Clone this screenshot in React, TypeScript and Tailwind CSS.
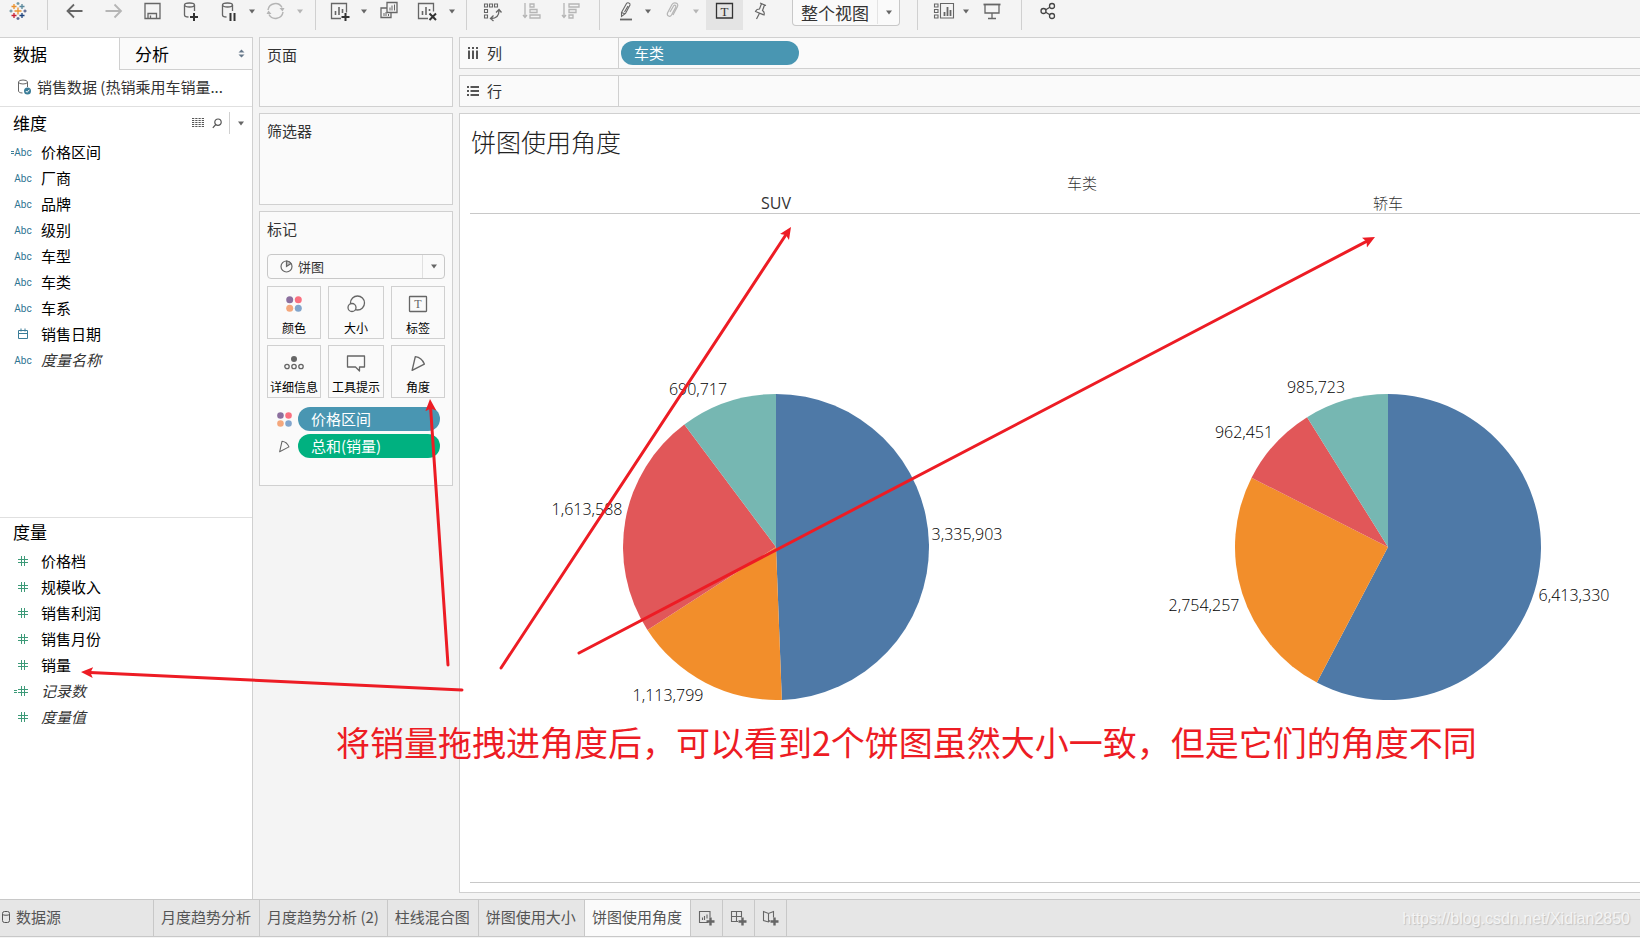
import React, { useState } from 'react';

type IconProps = {
  children: React.ReactNode;
  color?: string;
};

// Toolbar icons share a 20x22 box
const ToolIcon: React.FC<IconProps> = ({ children, color = '#666666' }) => (
  <svg width="20" height="22" viewBox="0 0 20 22" fill="none" stroke={color} strokeWidth="1.3" className="shrink-0 overflow-visible">
    {children}
  </svg>
);

const Caret = ({ color = '#666666' }: { color?: string }) => (
  <svg width="8" height="5" viewBox="0 0 8 5" className="shrink-0">
    <path d="M1 0.5h6L4 4.5z" fill={color} />
  </svg>
);

type ToolProps = {
  label: string;
  className: string;
  disabled?: boolean;
  children: React.ReactNode;
};

const Tool: React.FC<ToolProps> = ({ label, className, disabled, children }) => (
  <button aria-label={label} title={label} disabled={disabled} className={`flex h-[30px] shrink-0 justify-center ${className}`}>
    {children}
  </button>
);

const CaretTool = ({ className, disabled }: { className: string; disabled?: boolean }) => (
  <button aria-label="更多选项" disabled={disabled} className={`flex h-[22px] shrink-0 items-center justify-center ${className}`}>
    <Caret color={disabled ? '#b5b5b5' : '#666666'} />
  </button>
);

const ToolGroup = ({ className, children }: { className: string; children: React.ReactNode }) => (
  <div className={`flex h-[30px] shrink-0 items-start border-r border-[#d0d0d0] ${className}`}>{children}</div>
);

const Plus = ({ x, y }: { x: number; y: number }) => (
  <path d={`M${x - 4} ${y}h8M${x} ${y - 4}v8`} stroke="#333333" strokeWidth="2" />
);

const logoMarks = [
  { x: 10, y: 11, r: 3.5, color: '#eb912c' },
  { x: 6, y: 6.5, r: 2.5, color: '#eb912c' },
  { x: 14, y: 6.5, r: 2.5, color: '#59879b' },
  { x: 6, y: 15.5, r: 2.5, color: '#c72035' },
  { x: 14, y: 15.5, r: 2.5, color: '#1f447d' },
  { x: 10, y: 3.5, r: 1.5, color: '#7199a6' },
  { x: 10, y: 18.5, r: 1.5, color: '#5b6591' },
  { x: 3, y: 11, r: 1.5, color: '#7199a6' },
  { x: 17, y: 11, r: 1.5, color: '#5b6591' },
];

const Toolbar = () => (
  <header className="flex h-[37px] shrink-0 items-start overflow-hidden">
    <ToolGroup className="w-[48px] pl-2">
      <Tool label="开始页面" className="w-5">
        <ToolIcon>
          {logoMarks.map((m) => (
            <path key={`${m.x}-${m.y}`} d={`M${m.x - m.r} ${m.y}h${m.r * 2}M${m.x} ${m.y - m.r}v${m.r * 2}`} stroke={m.color} />
          ))}
        </ToolIcon>
      </Tool>
    </ToolGroup>
    <ToolGroup className="w-[268px] pl-[7px]">
      <Tool label="撤消" className="w-[39px]">
        <ToolIcon><path d="M17.500 11H3M9 4.500L2.500 11L9 17.500" strokeWidth="1.800" /></ToolIcon>
      </Tool>
      <Tool label="重做" className="w-[39px]" disabled>
        <ToolIcon color="#b5b5b5"><path d="M1.500 11h15M10.500 4.500L17 11L10.500 17.500" strokeWidth="1.800" /></ToolIcon>
      </Tool>
      <Tool label="保存" className="w-[39px]">
        <ToolIcon><path d="M2 3.500h15v15h-15zM5 18.500v-5h8.500v5M7.500 18v-2.500" /></ToolIcon>
      </Tool>
      <Tool label="新建数据源" className="w-[39px]">
        <ToolIcon>
          <ellipse cx="7.500" cy="5" rx="5" ry="2" />
          <path d="M2.500 5v10c0 1 1.500 2 4 2M12.500 5v6" />
          <Plus x={12} y={17} />
        </ToolIcon>
      </Tool>
      <Tool label="暂停自动更新" className="w-9">
        <ToolIcon>
          <ellipse cx="8.500" cy="5" rx="5" ry="2" />
          <path d="M3.500 5v10c0 1 1.500 2 4 2M13.500 5v6" />
          <path d="M11.500 13v8M15.500 13v8" stroke="#333333" strokeWidth="2" />
        </ToolIcon>
      </Tool>
      <CaretTool className="w-[10px]" />
      <Tool label="运行更新" className="w-9" disabled>
        <ToolIcon color="#b5b5b5">
          <path d="M3 10A7.500 7.500 0 0 1 17 7.500M18 12A7.500 7.500 0 0 1 4 14.500" strokeWidth="1.500" />
          <path d="M14.500 8h5l-2 3.500zM1.500 14h5L3.500 10.500z" fill="#b5b5b5" stroke="none" />
        </ToolIcon>
      </Tool>
      <CaretTool className="w-[14px]" disabled />
    </ToolGroup>
    <ToolGroup className="w-[151px] pl-[6px]">
      <Tool label="新建工作表" className="w-9">
        <ToolIcon>
          <path d="M11 18.500H1.500v-15h15v9" />
          <path d="M5.500 11v4M9 7v8M12.500 9v4" strokeWidth="1.600" />
          <Plus x={15.5} y={17} />
        </ToolIcon>
      </Tool>
      <CaretTool className="w-3" />
      <Tool label="复制" className="w-[38px]">
        <ToolIcon>
          <path d="M8 2.500h10v10H8zM8 8H2v9.500h10v-5" />
          <path d="M11 7.500v3M13 5.500v5M15.500 4.500v6M5 13v3M7 12v4M9.500 14v2" strokeWidth="1" />
        </ToolIcon>
      </Tool>
      <Tool label="清除工作表" className="w-[38px]">
        <ToolIcon>
          <path d="M11 18.500H1.500v-15h15v8" />
          <path d="M5.500 11v4M9 7v8M12.500 9v2" strokeWidth="1.600" />
          <path d="M12.500 13.500l6.500 6.500M19 13.500l-6.500 6.500" stroke="#333333" strokeWidth="2" />
        </ToolIcon>
      </Tool>
      <CaretTool className="w-3" />
    </ToolGroup>
    <ToolGroup className="w-[133px] pl-[6px]">
      <Tool label="交换行和列" className="w-[39px]">
        <ToolIcon>
          <path d="M1.500 4h3v3h-3zM6.500 4h3v3h-3zM11.500 4h3v3h-3zM1.500 9.500h3v3h-3zM1.500 15h3v3h-3z" strokeWidth="1.100" />
          <path d="M16 10.500c0 5-3 8-8 8M13 12.500l3-3l2.500 3M10.500 15.500l-3 3l3 2.500" />
        </ToolIcon>
      </Tool>
      <Tool label="升序排序" className="w-[39px]" disabled>
        <ToolIcon color="#b5b5b5">
          <path d="M3 3v14M1 15l2 2.500L5 15" />
          <path d="M8 4h4v3H8zM8 9.500h7v3H8zM8 15h10v3H8z" />
        </ToolIcon>
      </Tool>
      <Tool label="降序排序" className="w-[39px]" disabled>
        <ToolIcon color="#b5b5b5">
          <path d="M3 3v14M1 15l2 2.500L5 15" />
          <path d="M8 4h10v3H8zM8 9.500h7v3H8zM8 15h4v3H8z" />
        </ToolIcon>
      </Tool>
    </ToolGroup>
    <ToolGroup className="w-[318px] pl-2">
      <Tool label="突出显示" className="w-9">
        <ToolIcon>
          <path d="M5.500 12.500l5-9c1-1.500 4-.5 3.500 1.500l-4.500 8.500l-4 3zM5.500 12.500l4 1.500M12 6l-3.500 6" strokeWidth="1.100" />
          <path d="M4 19.500h12" strokeWidth="1.800" />
        </ToolIcon>
      </Tool>
      <CaretTool className="w-2" />
      <Tool label="组成员" className="w-[39px]" disabled>
        <ToolIcon color="#b5b5b5">
          <path d="M8 12l3.500-6c1-1.500 3-.5 2.200 1.200L9.500 15c-1.500 2.500-5 1-4-2l4.500-8.500c2-3 7-1.500 5.500 2L11 15" strokeWidth="1.200" />
        </ToolIcon>
      </Tool>
      <CaretTool className="mr-[5px] w-[10px]" disabled />
      <Tool label="显示标记标签" className="w-[37px] bg-[#e4e4e4]">
        <ToolIcon color="#333333">
          <path d="M1.500 3.500h16v14.500h-16z" />
          <text x="9.500" y="15.500" textAnchor="middle" fontSize="13" fill="#333333" stroke="none" className="font-['Liberation_Serif',serif]">T</text>
        </ToolIcon>
      </Tool>
      <Tool label="固定坐标轴" className="w-9">
        <ToolIcon>
          <path d="M9 3l6 2.500M10.500 3.800L8.500 9c-2 0-3.500 1-4 2.500l8.500 3.500c.5-1.500 0-3.500-1.500-4.500l2-5.500M8.500 13.300L5.500 19" strokeWidth="1.200" />
        </ToolIcon>
      </Tool>
      <div className="ml-[13px] flex h-[26px] w-[108px] rounded-b-sm border border-t-0 border-[#c8c8c8] bg-[#fafafa]">
        <select aria-label="适合" className="min-w-0 flex-1 appearance-none pl-2 text-[17px] leading-6 text-[#333333]">
          <option>整个视图</option>
        </select>
        <span className="flex h-6 w-[22px] items-center justify-center border-l border-[#e4e4e4]"><Caret /></span>
      </div>
    </ToolGroup>
    <ToolGroup className="w-[104px] pl-2">
      <Tool label="显示/隐藏卡" className="w-9">
        <ToolIcon>
          <path d="M.5 4h3.500v3H.5zM.5 9.500h3.500v3H.5zM.5 15h3.500v3H.5zM6.500 3.500h13v14.500H6.500z" strokeWidth="1.100" />
          <path d="M10.500 12v4M13.500 7v9M16.500 10v6" strokeWidth="1.800" />
        </ToolIcon>
      </Tool>
      <CaretTool className="w-2" />
      <Tool label="演示模式" className="w-[44px]">
        <ToolIcon>
          <path d="M3 4.500v8.500h14V4.500M10 13v5.500M6 18.500h8" />
          <path d="M1.500 4.500h17" strokeWidth="1.800" />
        </ToolIcon>
      </Tool>
    </ToolGroup>
    <Tool label="共享" className="ml-2 w-9">
      <ToolIcon color="#444444">
        <circle cx="5.500" cy="11" r="2.500" />
        <circle cx="14" cy="6" r="2.500" />
        <circle cx="14" cy="16" r="2.500" />
        <path d="M7.700 9.700l4.200-2.500M7.700 12.300l4.200 2.500" />
      </ToolIcon>
    </Tool>
  </header>
);

type FieldKind = 'text' | 'date' | 'number';

type Field = {
  name: string;
  kind: FieldKind;
  calculated?: boolean;
  generated?: boolean;
};

const dimensions: Field[] = [
  { name: '价格区间', kind: 'text', calculated: true },
  { name: '厂商', kind: 'text' },
  { name: '品牌', kind: 'text' },
  { name: '级别', kind: 'text' },
  { name: '车型', kind: 'text' },
  { name: '车类', kind: 'text' },
  { name: '车系', kind: 'text' },
  { name: '销售日期', kind: 'date' },
  { name: '度量名称', kind: 'text', generated: true },
];

const measures: Field[] = [
  { name: '价格档', kind: 'number' },
  { name: '规模收入', kind: 'number' },
  { name: '销售利润', kind: 'number' },
  { name: '销售月份', kind: 'number' },
  { name: '销量', kind: 'number' },
  { name: '记录数', kind: 'number', calculated: true, generated: true },
  { name: '度量值', kind: 'number', generated: true },
];

const FieldIcon = ({ kind }: { kind: FieldKind }) => {
  if (kind === 'text') {
    return <span className="pt-px font-['Roboto',sans-serif] text-[10px] leading-3 text-[#2d7391]">Abc</span>;
  }
  if (kind === 'date') {
    return (
      <svg width="12" height="12" viewBox="0 0 12 12" fill="none" stroke="#3b7d98" strokeWidth="1">
        <path d="M1.500 2.500h9v8h-9zM1.500 5.500h9M4 .5v3M8 .5v3" />
      </svg>
    );
  }
  return (
    <svg width="12" height="12" viewBox="0 0 12 12" fill="none" stroke="#3c9a78" strokeWidth="1">
      <path d="M1 4.500h10M1 7.500h10M4.500 1v10M7.500 1v10" />
    </svg>
  );
};

const FieldList = ({ fields }: { fields: Field[] }) => (
  <ul>
    {fields.map((field) => (
      <li key={field.name} className="flex h-[26px] items-center gap-[6px] pl-[11px]">
        <span className="relative flex w-6 items-center justify-center">
          <FieldIcon kind={field.kind} />
          {field.calculated && (
            <span
              className={`absolute h-[3px] w-[3px] border-y ${
                field.kind === 'number' ? 'left-[3px] border-[#3c9a78]' : 'left-0 border-[#3b7d98]'
              }`}
            />
          )}
        </span>
        <span className={`text-[15px] leading-6 ${field.generated ? 'italic text-[#333333]' : 'text-black'}`}>{field.name}</span>
      </li>
    ))}
  </ul>
);

const DataPane = () => (
  <aside className="flex w-[253px] shrink-0 flex-col border-r border-[#d0d0d0] bg-white">
    <div className="flex h-[33px] shrink-0 border-t border-[#d0d0d0] text-[17px] text-black">
      <button className="w-[119px] pl-[13px] text-left">数据</button>
      <button className="flex flex-1 items-center justify-between border-b border-l border-[#d0d0d0] bg-[#fafafa] pl-[15px] pr-[7px]">
        分析
        <svg width="7" height="9" viewBox="0 0 7 9" fill="#66788a">
          <path d="M3.500 0.500L6.500 3.500h-6zM3.500 8.500L.5 5.500h6z" />
        </svg>
      </button>
    </div>
    <button className="flex h-[37px] shrink-0 items-center gap-[6px] border-b border-[#e0e0e0] pb-[2px] pl-[17px] text-[15px] text-[#333333]">
      <svg width="14" height="16" viewBox="0 0 14 16" fill="none" stroke="#666666" className="shrink-0">
        <ellipse cx="6" cy="3" rx="4.500" ry="2" />
        <path d="M1.500 3v9c0 1 1.500 2 4 2M10.500 3v5" />
        <circle cx="10.500" cy="12" r="3.500" fill="#3b7d98" stroke="none" />
        <path d="M8.800 12l1.300 1.300l2.200-2.500" stroke="#ffffff" />
      </svg>
      <span className="whitespace-nowrap">销售数据 (热销乘用车销量...</span>
    </button>
    <section className="grow-[411] basis-0">
      <div className="flex h-8 items-center pl-[13px] pr-[7px]">
        <h2 className="flex-1 text-[17px] text-black">维度</h2>
        <button aria-label="查看数据">
          <svg width="12" height="10" viewBox="0 0 12 10" stroke="#555555" strokeWidth="1">
            <path d="M0 .5h12M0 2.500h12M0 4.500h12M0 6.500h12M0 8.500h12" strokeDasharray="2.250 1" />
          </svg>
        </button>
        <button aria-label="查找字段" className="ml-2">
          <svg width="11" height="11" viewBox="0 0 11 11" fill="none" stroke="#555555" strokeWidth="1.200">
            <circle cx="6" cy="4.200" r="3.200" />
            <path d="M3.800 6.500L.8 9.800" />
          </svg>
        </button>
        <span className="ml-[6px] h-[22px] w-px bg-[#d0d0d0]" />
        <button aria-label="维度菜单" className="ml-[7px]"><Caret /></button>
      </div>
      <FieldList fields={dimensions} />
    </section>
    <section className="grow-[381] basis-0 border-t border-[#e0e0e0]">
      <h2 className="pb-[2px] pl-[13px] text-[17px] leading-[28px] text-black">度量</h2>
      <FieldList fields={measures} />
    </section>
  </aside>
);

const ColorDots = ({ size }: { size: number }) => (
  <svg width={size} height={size} viewBox="0 0 16 16">
    <circle cx="3.700" cy="3.700" r="3.500" fill="#8b6f9e" />
    <circle cx="12.300" cy="3.700" r="3.500" fill="#fa7080" />
    <circle cx="3.700" cy="12.300" r="3.500" fill="#f4a77c" />
    <circle cx="12.300" cy="12.300" r="3.500" fill="#82a5cc" />
  </svg>
);

const AngleIcon = ({ size }: { size: number }) => (
  <svg width={size} height={size} viewBox="0 0 16 16" fill="none" stroke="#666666" strokeWidth="1.300" strokeLinejoin="round">
    <path d="M5 1.500L2 14.500L13.500 8.500C12 4.500 9 2 5 1.500z" />
  </svg>
);

const markButtons = [
  { label: '颜色', icon: <ColorDots size={16} /> },
  {
    label: '大小',
    icon: (
      <svg width="20" height="18" viewBox="0 0 20 18" fill="none" stroke="#666666" strokeWidth="1.300">
        <circle cx="11.500" cy="8" r="7" />
        <circle cx="6" cy="12.500" r="4" fill="#fafafa" />
      </svg>
    ),
  },
  {
    label: '标签',
    icon: (
      <svg width="20" height="18" viewBox="0 0 20 18" fill="none" stroke="#666666" strokeWidth="1.300">
        <rect x="1.500" y="1.500" width="17" height="15" rx=".5" />
        <text x="10" y="13" textAnchor="middle" fontSize="12" fill="#666666" stroke="none" className="font-['Liberation_Serif',serif]">T</text>
      </svg>
    ),
  },
  {
    label: '详细信息',
    icon: (
      <svg width="20" height="16" viewBox="0 0 20 16" fill="none" stroke="#666666" strokeWidth="1.300">
        <circle cx="10" cy="4" r="3" fill="#666666" stroke="none" />
        <circle cx="3" cy="11.500" r="2.200" />
        <circle cx="10" cy="11.500" r="2.200" />
        <circle cx="17" cy="11.500" r="2.200" />
      </svg>
    ),
  },
  {
    label: '工具提示',
    icon: (
      <svg width="20" height="18" viewBox="0 0 20 18" fill="none" stroke="#666666" strokeWidth="1.300" strokeLinejoin="round">
        <path d="M1.500 2h17v11h-5v4l-4-4h-8z" />
      </svg>
    ),
  },
  { label: '角度', icon: <AngleIcon size={17} /> },
];

const MarksCard = () => (
  <section className="h-[275px] border border-[#d0d0d0] bg-[#fafafa] px-[7px]">
    <h2 className="pt-[5px] text-[15px] leading-6">标记</h2>
    <div className="mt-[13px] flex h-[25px] rounded-sm border border-[#c8c8c8]">
      <label htmlFor="mark-type" className="flex items-center pl-3">
        <svg width="13" height="13" viewBox="0 0 13 13" fill="none" stroke="#666666" strokeWidth="1.200" role="img" aria-label="标记类型">
          <circle cx="6.500" cy="6.500" r="5.500" />
          <path d="M6.500 1v5.500L11 3.500A5.500 5.500 0 0 0 6.500 1z" fill="#bbbbbb" />
        </svg>
      </label>
      <select id="mark-type" className="min-w-0 flex-1 appearance-none pl-[5px] text-[13px] text-[#333333]">
        <option>饼图</option>
      </select>
      <span className="flex w-[22px] items-center justify-center border-l border-[#e0e0e0]"><Caret /></span>
    </div>
    <div className="mt-[7px] grid grid-cols-[54px_56px_54px] justify-between gap-y-[6px]">
      {markButtons.map((button) => (
        <button key={button.label} className="flex h-[53px] flex-col items-center border border-[#d0d0d0] pt-[5px] text-xs text-black">
          <span className="flex h-6 items-center">{button.icon}</span>
          <span className="mt-[2px] whitespace-nowrap leading-5">{button.label}</span>
        </button>
      ))}
    </div>
    <ul className="mt-[9px] flex flex-col gap-[3px] pl-[10px] pr-[5px] text-[15px] text-white">
      <li className="flex items-center gap-[6px]">
        <span className="flex w-[15px] justify-center"><ColorDots size={15} /></span>
        <button className="h-6 flex-1 rounded-full bg-[#4996b2] pl-[13px] text-left leading-6">价格区间</button>
      </li>
      <li className="flex items-center gap-[6px]">
        <span className="flex w-[15px] justify-center"><AngleIcon size={13} /></span>
        <button className="h-6 flex-1 rounded-full bg-[#00b180] pl-[13px] text-left leading-6">总和(销量)</button>
      </li>
    </ul>
  </section>
);

const CardsColumn = () => (
  <div className="flex w-[194px] shrink-0 flex-col gap-[6px] text-[#333333]">
    <section className="h-[70px] border border-[#d0d0d0] bg-[#fafafa] px-[7px] pt-[5px]">
      <h2 className="text-[15px] leading-6">页面</h2>
    </section>
    <section className="h-[92px] border border-[#d0d0d0] bg-[#fafafa] px-[7px] pt-[5px]">
      <h2 className="text-[15px] leading-6">筛选器</h2>
    </section>
    <MarksCard />
  </div>
);

type ShelfProps = {
  title: string;
  icon: React.ReactNode;
  children?: React.ReactNode;
};

const Shelf: React.FC<ShelfProps> = ({ title, icon, children }) => (
  <div className="flex h-8 shrink-0 border-y border-l border-[#d0d0d0] bg-[#fafafa] text-[15px]">
    <div className="flex w-[159px] shrink-0 items-center gap-2 border-r border-[#d0d0d0] pl-[7px] text-[#333333]">
      {icon}
      {title}
    </div>
    <div className="flex flex-1 items-center pl-[2px]">{children}</div>
  </div>
);

type Slice = {
  value: number;
  color: string;
  // label centre, measured from the centre of the pie
  labelX: number;
  labelY: number;
};

const suvSlices: Slice[] = [
  { value: 3335903, color: '#4e79a7', labelX: 191, labelY: -13 },
  { value: 1113799, color: '#f28e2b', labelX: -108, labelY: 148 },
  { value: 1613588, color: '#e15759', labelX: -189, labelY: -38 },
  { value: 690717, color: '#76b7b2', labelX: -78, labelY: -158 },
];

const sedanSlices: Slice[] = [
  { value: 6413330, color: '#4e79a7', labelX: 186, labelY: 48 },
  { value: 2754257, color: '#f28e2b', labelX: -184, labelY: 58 },
  { value: 962451, color: '#e15759', labelX: -144, labelY: -115 },
  { value: 985723, color: '#76b7b2', labelX: -72, labelY: -160 },
];

const RADIUS = 153;

const Pie = ({ slices }: { slices: Slice[] }) => {
  const total = slices.reduce((sum, s) => sum + s.value, 0);
  let angle = 0;

  const paths = slices.map((slice) => {
    const start = angle;
    const end = angle + (slice.value / total) * Math.PI * 2;
    angle = end;
    const large = end - start > Math.PI ? 1 : 0;
    const x1 = RADIUS * Math.sin(start);
    const y1 = -RADIUS * Math.cos(start);
    const x2 = RADIUS * Math.sin(end);
    const y2 = -RADIUS * Math.cos(end);
    return <path key={slice.value} d={`M0 0L${x1} ${y1}A${RADIUS} ${RADIUS} 0 ${large} 1 ${x2} ${y2}Z`} fill={slice.color} />;
  });

  return (
    <svg width="306" height="306" viewBox="-153 -153 306 306" className="overflow-visible">
      {paths}
      {slices.map((slice) => (
        <text
          key={slice.value}
          x={slice.labelX}
          y={slice.labelY + 6}
          textAnchor="middle"
          fill="#000000"
          className="font-['Open_Sans','Noto_Sans',sans-serif] text-[16px] font-light"
        >
          {slice.value.toLocaleString('en-US')}
        </text>
      ))}
    </svg>
  );
};

const Sheet = () => (
  <section className="flex flex-1 flex-col overflow-hidden border-y border-l border-[#d0d0d0] bg-white pb-[9px] pl-[10px]">
    <h1 className="pt-[9px] pl-px text-[25px] font-light leading-9 text-[#222222]">饼图使用角度</h1>
    {/* the view is wider than its window and runs off the right edge */}
    <div className="flex w-full min-w-[1224px] flex-1 flex-col border-b border-[#c8c8c8]">
      <p className="mt-[14px] text-center text-[15px] font-light leading-5 text-[#333333]">车类</p>
      <div className="grid grid-cols-2 border-b border-[#c8c8c8] text-center text-[15px] leading-5 text-[#333333]">
        <span className="font-['Open_Sans','Noto_Sans',sans-serif] text-[16px]">SUV</span>
        <span className="font-light">轿车</span>
      </div>
      <div className="grid flex-1 grid-cols-2 place-items-center pb-[2px]">
        <Pie slices={suvSlices} />
        <Pie slices={sedanSlices} />
      </div>
    </div>
  </section>
);

const sheets = ['月度趋势分析', '月度趋势分析 (2)', '柱线混合图', '饼图使用大小', '饼图使用角度'];

const newSheetButtons = [
  { label: '新建工作表', d: 'M10 12.500H1.500v-11h10.500v6M4.500 7.500v2.500M6.500 6v4M9 4.500v4' },
  { label: '新建仪表板', d: 'M8 11.500H1.500v-10h10v6M1.500 6.500h10M6.500 1.500v10' },
  { label: '新建故事', d: 'M8 10.500L6.500 12L1.500 10.500V1.500L6.500 3.500L11.500 1.500V7.500M6.500 3.500V12' },
];

const SheetTabs = () => {
  const [active, setActive] = useState('饼图使用角度');

  return (
    <footer className="mb-px flex h-[38px] shrink-0 border-y border-[#c8c8c8] bg-[#e6e6e6] text-[15px] text-[#555555]">
      <button className="flex w-[154px] items-center gap-[6px] border-r border-[#c8c8c8] pb-[2px] pl-[2px]">
        <svg width="8" height="12" viewBox="0 0 8 12" fill="none" stroke="#555555">
          <rect x=".5" y=".5" width="7" height="11" rx="2" />
          <path d="M.5 3.500c1 1 6 1 7 0" />
        </svg>
        数据源
      </button>
      {sheets.map((sheet) => (
        <button
          key={sheet}
          onClick={() => setActive(sheet)}
          className={`whitespace-nowrap border-r border-[#c8c8c8] pb-[2px] pl-[7px] pr-2 ${sheet === active ? 'bg-[#fafafa]' : ''}`}
        >
          {sheet}
        </button>
      ))}
      {newSheetButtons.map((button) => (
        <button key={button.label} aria-label={button.label} className="flex w-8 items-center justify-center border-r border-[#c8c8c8]">
          <svg width="17" height="17" viewBox="0 0 17 17" fill="none" stroke="#666666" strokeWidth="1.100">
            <path d={button.d} />
            <path d="M8.500 11.500h8M12.500 7.500v8" strokeWidth="2.400" />
          </svg>
        </button>
      ))}
      <a
        href="https://blog.csdn.net/Xidian2850"
        className="ml-auto self-center pt-px pr-[10px] font-['Liberation_Sans',sans-serif] text-[16px] text-[#f4f4f4] [text-shadow:1px_1px_1px_#c0c0c0]"
      >
        https://blog.csdn.net/Xidian2850
      </a>
    </footer>
  );
};

const arrows = [
  { x1: 501, y1: 668, x2: 791, y2: 227 },
  { x1: 579, y1: 653, x2: 1375, y2: 237 },
  { x1: 448, y1: 665, x2: 430, y2: 399 },
  { x1: 462, y1: 690, x2: 81, y2: 672 },
];

const HEAD = 9;

const Arrow = ({ x1, y1, x2, y2 }: { x1: number; y1: number; x2: number; y2: number }) => {
  // the shaft stops at the notch of the head
  const length = Math.hypot(x2 - x1, y2 - y1);
  const endX = x2 - ((x2 - x1) / length) * HEAD;
  const endY = y2 - ((y2 - y1) / length) * HEAD;
  return <line x1={x1} y1={y1} x2={endX} y2={endY} markerEnd="url(#head)" />;
};

const Annotations = () => (
  <div className="pointer-events-none absolute inset-0 text-[#ed1c24]">
    <svg className="h-full w-full" stroke="currentColor" strokeWidth="3" strokeLinecap="round">
      <defs>
        <marker id="head" markerUnits="userSpaceOnUse" markerWidth="14" markerHeight="12" refX="3" refY="6" orient="auto">
          <path d="M12 6L0 .5L2.500 6L0 11.500z" fill="#ed1c24" stroke="none" />
        </marker>
      </defs>
      {arrows.map((a) => (
        <Arrow key={a.x1} {...a} />
      ))}
    </svg>
    <p className="absolute left-[336px] top-[718px] whitespace-nowrap text-[34px] leading-[48px]">
      将销量拖拽进角度后，可以看到2个饼图虽然大小一致，但是它们的角度不同
    </p>
  </div>
);

const App = () => (
  <div className="relative flex h-screen min-h-[800px] flex-col overflow-hidden bg-[#f4f4f4] font-['Noto_Sans_CJK_SC',sans-serif]">
    <Toolbar />
    <main className="flex min-h-0 flex-1 gap-[6px]">
      <DataPane />
      <CardsColumn />
      <div className="flex min-w-0 flex-1 flex-col gap-[6px] pb-[6px]">
        <Shelf
          title="列"
          icon={
            <svg width="12" height="12" viewBox="0 0 12 12" stroke="#555555" strokeWidth="2">
              <path d="M2 0v2M6 0v2M10 0v2M2 3.500v8.500M6 3.500v8.500M10 3.500v8.500" />
            </svg>
          }
        >
          <button className="h-6 w-[178px] rounded-full bg-[#4996b2] pl-[13px] text-left leading-6 text-white">车类</button>
        </Shelf>
        <Shelf
          title="行"
          icon={
            <svg width="12" height="12" viewBox="0 0 12 12" stroke="#555555" strokeWidth="2">
              <path d="M0 2h2M0 6h2M0 10h2M3.500 2h8.500M3.500 6h8.500M3.500 10h8.500" />
            </svg>
          }
        />
        <Sheet />
      </div>
    </main>
    <SheetTabs />
    <Annotations />
  </div>
);

export default App;
